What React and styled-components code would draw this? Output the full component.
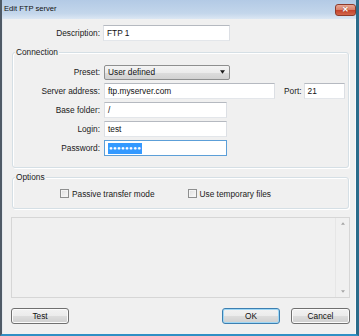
import styled, { createGlobalStyle } from 'styled-components';

const GlobalStyle = createGlobalStyle`
    body {
        margin: 0;
        background: #f0f0f0;
        font-family: "Liberation Sans", Arial, sans-serif;
    }
`;

const Frame = styled.div`
    width: 359px;
    height: 336px;
    box-sizing: border-box;
    display: flex;
    flex-direction: column;
    border-left: 2px solid #4f5a66;
    border-right: 3px solid #2b6b8a;
    border-bottom: 2px solid #2f8fc4;
    overflow: hidden;
`;

const TitleBar = styled.div`
    height: 19px;
    box-sizing: border-box;
    padding: 0 0 2px 2px;
    display: flex;
    align-items: center;
    justify-content: space-between;
    background: linear-gradient(#b3cae5 0%, #c3d6eb 70%, #dce7f3 100%);
`;

const Title = styled.span`
    font-size: 7.6px;
    color: #111;
`;

const CloseButton = styled.div`
    width: 21px;
    height: 12px;
    margin-top: 2px;
    box-sizing: border-box;
    border: 1px solid #8d3b2b;
    border-radius: 3px;
    background: linear-gradient(#e8a795 0%, #d9826c 45%, #c5442d 55%, #d2664b 100%);
    display: flex;
    align-items: center;
    justify-content: center;
    color: #fff;
    font-size: 8px;
    font-weight: bold;
    text-shadow: 0 0 1px #7a2718;
`;

const Body = styled.div`
    flex: none;
    height: 315px;
    box-sizing: border-box;
    border-left: 1px solid #e4e9ee;
    border-right: 1px solid #f8fafc;
    padding: 6px 5px 10px 8px;
    background: #f0f0f0;
    display: flex;
    flex-direction: column;
`;

const Row = styled.div`
    display: flex;
    align-items: center;
    height: 16px;
    gap: ${props => props.gap || '4px'};
`;

const Label = styled.div`
    width: ${props => props.width || '87px'};
    text-align: right;
    font-size: 8.3px;
    color: #1a1a1a;
    white-space: nowrap;
    flex: none;
`;

const Field = styled.div`
    width: ${props => props.width};
    height: 16px;
    box-sizing: border-box;
    border: 1px solid;
    border-color: ${props => props.focused ? '#5c9fd8' : '#b5b9c0 #dcdfe4 #e3e6ea #dcdfe4'};
    background: #fff;
    padding-left: 3px;
    font-size: 8.3px;
    color: #111;
    display: flex;
    align-items: center;
    flex: none;
`;

const Selected = styled.span`
    background: #3399ff;
    color: #fff;
    height: 11px;
    padding: 0 1px;
    font-size: 6px;
    letter-spacing: 0.4px;
    display: flex;
    align-items: center;
`;

const Select = styled.div`
    width: 126px;
    height: 15px;
    box-sizing: border-box;
    border: 1px solid #8e8f8f;
    border-radius: 2px;
    background: linear-gradient(#f4f4f4 0%, #ebebeb 50%, #dddddd 50%, #d1d1d1 100%);
    padding: 0 4px 0 3px;
    font-size: 8.3px;
    color: #111;
    display: flex;
    align-items: center;
    justify-content: space-between;
`;

const Group = styled.div`
    position: relative;
    margin: ${props => props.top} 1px 0 1px;
    border: 1px solid #d5dfe5;
    border-radius: 3px;
    box-shadow: inset 1px 1px 0 #fff, 1px 1px 0 #fff;
    padding: ${props => props.pad};
    display: flex;
    flex-direction: column;
    gap: 3px;
`;

const Caption = styled.span`
    position: absolute;
    top: -6px;
    left: 2px;
    padding: 0 1px;
    background: #f0f0f0;
    font-size: 8.3px;
    color: #1a1a1a;
    line-height: 11px;
`;

const PortLabel = styled.span`
    font-size: 8.3px;
    color: #1a1a1a;
    margin: 0 -2px 0 5px;
`;

const CheckRow = styled.div`
    display: flex;
    align-items: center;
    height: 13px;
    padding-left: 47px;
    gap: 33px;
`;

const CheckItem = styled.div`
    display: flex;
    align-items: center;
    gap: 3px;
    font-size: 8.3px;
    color: #1a1a1a;
`;

const Box = styled.span`
    width: 9px;
    height: 9px;
    box-sizing: border-box;
    border: 1px solid #8e8f8f;
    background: linear-gradient(135deg, #dcdcdc, #fbfbfb);
    box-shadow: inset 0 0 0 1px #f4f4f4;
`;

const LogBox = styled.div`
    margin-top: 8px;
    height: 81px;
    box-sizing: border-box;
    border: 1px solid #d6d6d6;
    background: #f0f0f0;
    display: flex;
    justify-content: flex-end;
`;

const ScrollBar = styled.div`
    width: 13px;
    border-left: 1px solid #e6e6e6;
    display: flex;
    flex-direction: column;
    justify-content: space-between;
    align-items: center;
    padding: 4px 0;
`;

const ButtonRow = styled.div`
    margin-top: 10px;
    display: flex;
    gap: 11px;
`;

const Button = styled.div`
    width: ${props => props.width || '58px'};
    height: 16px;
    box-sizing: border-box;
    border: 1px solid ${props => props.primary ? '#3c7fb1' : '#707070'};
    border-radius: 3px;
    background: linear-gradient(#f2f2f2 0%, #ebebeb 50%, #dddddd 50%, #cfcfcf 100%);
    box-shadow: inset 0 0 0 1px ${props => props.primary ? '#9fd7f5' : '#fbfbfb'};
    margin-left: ${props => props.push ? 'auto' : '0'};
    display: flex;
    align-items: center;
    justify-content: center;
    font-size: 8.3px;
    color: #111;
`;

const Arrow = ({ up, color = '#1a1a1a', size = 5 }) => (
    <svg width={size} height={Math.ceil(size / 2) + 1} viewBox="0 0 6 4">
        <path d={up ? 'M0 4 L3 0 L6 4 Z' : 'M0 0 L6 0 L3 4 Z'} fill={color} />
    </svg>
);

const App = () => {
    return (
        <>
            <GlobalStyle />
            <Frame>
                <TitleBar>
                    <Title>Edit FTP server</Title>
                    <CloseButton>✕</CloseButton>
                </TitleBar>
                <Body>
                    <Row gap="3px">
                        <Label width="89px">Description:</Label>
                        <Field width="127px">FTP 1</Field>
                    </Row>

                    <Group top="11px" pad="11px 0 11px 0">
                        <Caption>Connection</Caption>
                        <Row>
                            <Label>Preset:</Label>
                            <Select>
                                User defined
                                <Arrow />
                            </Select>
                        </Row>
                        <Row>
                            <Label>Server address:</Label>
                            <Field width="171px">ftp.myserver.com</Field>
                            <PortLabel>Port:</PortLabel>
                            <Field width="41px">21</Field>
                        </Row>
                        <Row>
                            <Label>Base folder:</Label>
                            <Field width="123px">/</Field>
                        </Row>
                        <Row>
                            <Label>Login:</Label>
                            <Field width="123px">test</Field>
                        </Row>
                        <Row>
                            <Label>Password:</Label>
                            <Field width="123px" focused>
                                <Selected>●●●●●●●●</Selected>
                            </Field>
                        </Row>
                    </Group>

                    <Group top="9px" pad="9px 0 8px 0">
                        <Caption>Options</Caption>
                        <CheckRow>
                            <CheckItem><Box />Passive transfer mode</CheckItem>
                            <CheckItem><Box />Use temporary files</CheckItem>
                        </CheckRow>
                    </Group>

                    <LogBox>
                        <ScrollBar>
                            <Arrow up color="#a6a6a6" size={4} />
                            <Arrow color="#a6a6a6" size={4} />
                        </ScrollBar>
                    </LogBox>

                    <ButtonRow>
                        <Button>Test</Button>
                        <Button primary push>OK</Button>
                        <Button width="59px">Cancel</Button>
                    </ButtonRow>
                </Body>
            </Frame>
        </>
    );
};

export default App;
